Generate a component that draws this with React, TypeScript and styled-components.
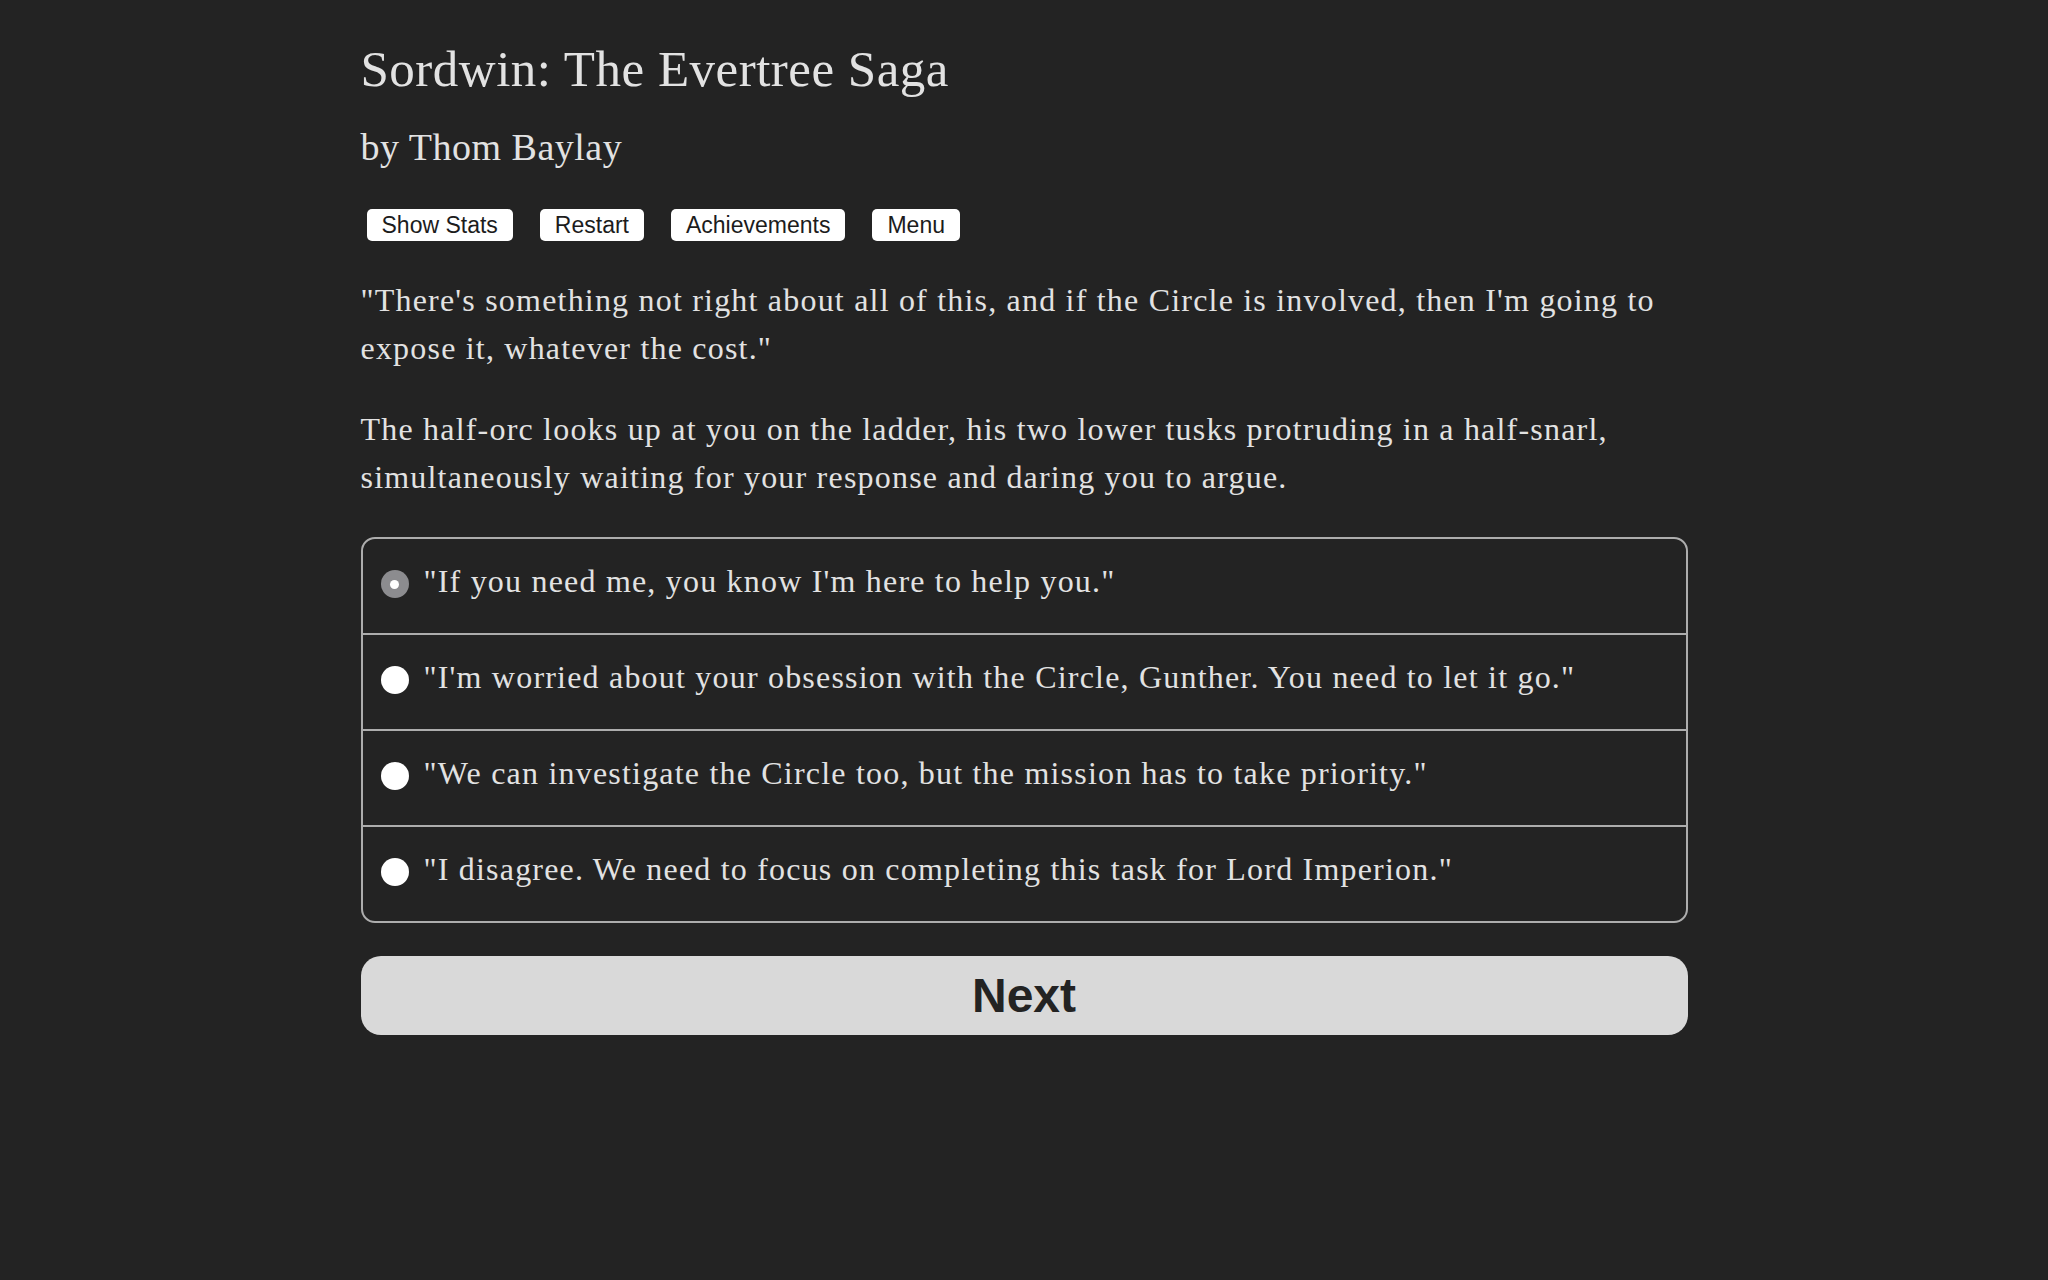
import styled, { createGlobalStyle } from "styled-components";

const GlobalStyle = createGlobalStyle`
  html, body {
    margin: 0;
    padding: 0;
    background: #232323;
  }
`;

const serif = `"Palatino Linotype", "Book Antiqua", Palatino, "Liberation Serif", serif`;
const sans = `"Liberation Sans", Arial, Helvetica, sans-serif`;

const Page = styled.main`
  width: 1327px;
  margin: 0 auto;
  padding-top: 40px;
  color: #e2e2e2;
  font-family: ${serif};
`;

const Title = styled.h1`
  margin: 0;
  font-size: 51px;
  line-height: 58px;
  font-weight: normal;
  letter-spacing: 0.5px;
`;

const Author = styled.h2`
  margin: 28px 0 0;
  font-size: 38px;
  line-height: 43px;
  font-weight: normal;
  letter-spacing: 0.5px;
`;

const ButtonBar = styled.div`
  display: flex;
  gap: 27px;
  margin: 40px 0 0 6px;
`;

const MenuButton = styled.button`
  height: 32px;
  padding: 0 15px;
  border: none;
  border-radius: 5px;
  background: #fff;
  color: #1c1c1c;
  font-family: ${sans};
  font-size: 23px;
  line-height: 32px;
  cursor: pointer;
`;

const Story = styled.section`
  margin: 35px 0 36px;
`;

const Para = styled.p`
  margin: 0;
  font-size: 32px;
  line-height: 48px;
  letter-spacing: 1.2px;

  & + & {
    margin-top: 33px;
  }
`;

const ChoiceList = styled.form`
  border: 2px solid #adadad;
  border-radius: 14px;
  overflow: hidden;
`;

const ChoiceRow = styled.label<{ first?: boolean }>`
  display: flex;
  align-items: flex-start;
  gap: 15px;
  padding: 18px 18px 28px;
  border-top: ${p => (p.first ? "none" : "2px solid #adadad")};
  font-size: 32px;
  line-height: 48px;
  letter-spacing: 1.2px;
  cursor: pointer;
`;

const Radio = styled.span<{ checked?: boolean }>`
  flex: none;
  width: 28px;
  height: 28px;
  margin-top: 13px;
  border-radius: 50%;
  background: ${p => (p.checked ? "#8c8c8f" : "#fff")};
  display: flex;
  align-items: center;
  justify-content: center;

  &::after {
    content: "";
    width: 9px;
    height: 9px;
    border-radius: 50%;
    background: #fff;
    display: ${p => (p.checked ? "block" : "none")};
  }
`;

const NextButton = styled.button`
  display: block;
  width: 100%;
  height: 79px;
  margin-top: 33px;
  border: none;
  border-radius: 20px;
  background: #d9d9d9;
  color: #232323;
  font-family: ${sans};
  font-size: 48px;
  font-weight: bold;
  cursor: pointer;
`;

const choices = [
    "\"If you need me, you know I'm here to help you.\"",
    "\"I'm worried about your obsession with the Circle, Gunther. You need to let it go.\"",
    "\"We can investigate the Circle too, but the mission has to take priority.\"",
    "\"I disagree. We need to focus on completing this task for Lord Imperion.\"",
];

export default function App() {
    return (
        <>
            <GlobalStyle/>
            <Page>
                <Title>Sordwin: The Evertree Saga</Title>
                <Author>by Thom Baylay</Author>
                <ButtonBar>
                    <MenuButton>Show Stats</MenuButton>
                    <MenuButton>Restart</MenuButton>
                    <MenuButton>Achievements</MenuButton>
                    <MenuButton>Menu</MenuButton>
                </ButtonBar>
                <Story>
                    <Para>
                        "There's something not right about all of this, and if the Circle is involved, then I'm going to
                        expose it, whatever the cost."
                    </Para>
                    <Para>
                        The half-orc looks up at you on the ladder, his two lower tusks protruding in a half-snarl,
                        simultaneously waiting for your response and daring you to argue.
                    </Para>
                </Story>
                <ChoiceList>
                    {choices.map((text, i) => (
                        <ChoiceRow key={i} first={i === 0}>
                            <Radio checked={i === 0}/>
                            <span>{text}</span>
                        </ChoiceRow>
                    ))}
                </ChoiceList>
                <NextButton>Next</NextButton>
            </Page>
        </>
    );
}
